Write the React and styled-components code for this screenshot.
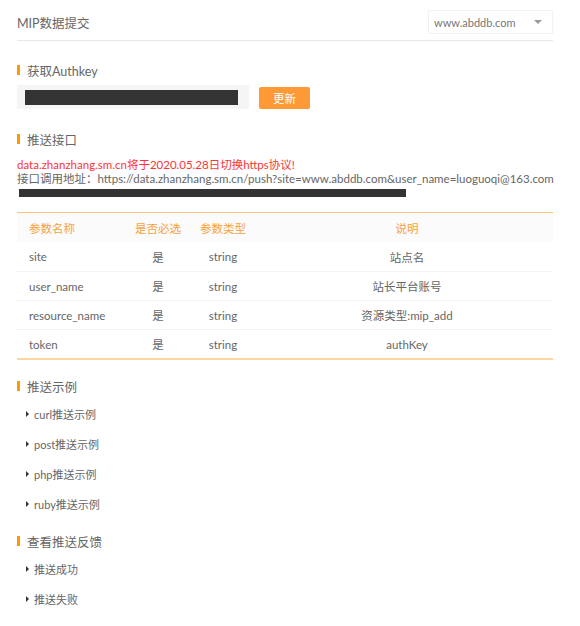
import styled, { createGlobalStyle } from "styled-components";

const GlobalStyle = createGlobalStyle`
  body {
    margin: 0;
    background: #fff;
    font-family: Lato, "Noto Sans CJK SC", sans-serif;
    color: #666;
  }
`;

const Page = styled.div`
  width: 536px;
  margin-left: 17px;
`;

const Header = styled.div`
  display: flex;
  justify-content: space-between;
  align-items: flex-end;
  height: 41px;
  padding-bottom: 6px;
  box-sizing: border-box;
  border-bottom: 1px solid #e8e8e8;
`;

const Title = styled.div`
  font-size: 12.5px;
  line-height: 24px;
  padding-bottom: 0;
  margin-bottom: -2px;
  color: #666;
`;

const Select = styled.div`
  width: 125px;
  height: 24px;
  box-sizing: border-box;
  border: 1px solid #f2f2f2;
  display: flex;
  align-items: center;
  justify-content: space-between;
  padding: 0 10px 0 5px;
  font-size: 11px;
  color: #777;
`;

const Caret = styled.span`
  width: 0;
  height: 0;
  border-left: 4px solid transparent;
  border-right: 4px solid transparent;
  border-top: 4px solid #999;
`;

const Section = styled.div`
  margin-top: ${(p) => p.gap}px;
`;

const Heading = styled.div`
  display: flex;
  align-items: center;
  height: 20px;
  font-size: 12.5px;
  color: #666;

  &::before {
    content: "";
    width: 3px;
    height: 10px;
    background: #f90;
    margin-right: 7px;
  }
`;

const KeyRow = styled.div`
  display: flex;
  align-items: flex-end;
  margin-top: 5px;
`;

const KeyInput = styled.div`
  width: 232px;
  height: 24px;
  background: #f5f5f5;
  display: flex;
  align-items: center;
  padding-left: 8px;
  box-sizing: border-box;
`;

const Redacted = styled.div`
  width: ${(p) => p.w}px;
  height: ${(p) => p.h}px;
  background: #333;
`;

const UpdateButton = styled.button`
  margin-left: 10px;
  width: 51px;
  height: 22px;
  border: 0;
  border-radius: 2px;
  background: #fd9a35;
  color: #fff;
  font-family: inherit;
  font-size: 11.5px;
  padding: 0;
`;

const Notice = styled.div`
  margin-top: ${(p) => (p.warn ? 9 : 0)}px;
  font-size: 11.5px;
  line-height: 14px;
  color: ${(p) => (p.warn ? "#f33" : "#666")};
  white-space: nowrap;
`;

const RedactRow = styled.div`
  height: 14px;
  display: flex;
  align-items: center;
  padding-left: 2px;
`;

const Table = styled.div`
  margin-top: 12px;
  border-top: 1px solid #fbc57f;
  border-bottom: 2px solid #fcd59f;
`;

const Row = styled.div`
  display: grid;
  grid-template-columns: 114px 54px 76px 1fr;
  align-items: center;
  height: 29px;
  font-size: 11.5px;
  color: ${(p) => (p.head ? "#f9a13a" : "#666")};
  background: ${(p) => (p.head ? "#fbfbfb" : "#fff")};
  border-top: ${(p) => (p.first || p.head ? "0" : "1px solid #f3f3f3")};
  box-sizing: border-box;
`;

const Cell = styled.div`
  text-align: ${(p) => (p.left ? "left" : "center")};
  padding-left: ${(p) => (p.left ? "12px" : "0")};
  white-space: nowrap;
`;

const List = styled.div`
  margin-top: 3px;
`;

const Item = styled.div`
  display: flex;
  align-items: center;
  height: 30px;
  padding-left: 9px;
  font-size: 11px;
  color: #666;

  &::before {
    content: "";
    width: 0;
    height: 0;
    border-top: 3px solid transparent;
    border-bottom: 3px solid transparent;
    border-left: 3px solid #333;
    margin-right: 5px;
  }
`;

const params = [
  ["site", "是", "string", "站点名"],
  ["user_name", "是", "string", "站长平台账号"],
  ["resource_name", "是", "string", "资源类型:mip_add"],
  ["token", "是", "string", "authKey"],
];

export default function App() {
  return (
    <>
      <GlobalStyle />
      <Page>
        <Header>
          <Title>MIP数据提交</Title>
          <Select>
            www.abddb.com
            <Caret />
          </Select>
        </Header>

        <Section gap={19}>
          <Heading>获取Authkey</Heading>
          <KeyRow>
            <KeyInput>
              <Redacted w={213} h={15} />
            </KeyInput>
            <UpdateButton>更新</UpdateButton>
          </KeyRow>
        </Section>

        <Section gap={20}>
          <Heading>推送接口</Heading>
          <Notice warn>data.zhanzhang.sm.cn将于2020.05.28日切换https协议!</Notice>
          <Notice>
            接口调用地址：https://data.zhanzhang.sm.cn/push?site=www.abddb.com&user_name=luoguoqi@163.com
          </Notice>
          <RedactRow>
            <Redacted w={387} h={8} />
          </RedactRow>
          <Table>
            <Row head>
              <Cell left>参数名称</Cell>
              <Cell>是否必选</Cell>
              <Cell>参数类型</Cell>
              <Cell>说明</Cell>
            </Row>
            {params.map((p, i) => (
              <Row key={p[0]} first={i === 0}>
                <Cell left>{p[0]}</Cell>
                <Cell>{p[1]}</Cell>
                <Cell>{p[2]}</Cell>
                <Cell>{p[3]}</Cell>
              </Row>
            ))}
          </Table>
        </Section>

        <Section gap={16}>
          <Heading>推送示例</Heading>
          <List>
            <Item>curl推送示例</Item>
            <Item>post推送示例</Item>
            <Item>php推送示例</Item>
            <Item>ruby推送示例</Item>
          </List>
        </Section>

        <Section gap={12}>
          <Heading>查看推送反馈</Heading>
          <List>
            <Item>推送成功</Item>
            <Item>推送失败</Item>
          </List>
        </Section>
      </Page>
    </>
  );
}
